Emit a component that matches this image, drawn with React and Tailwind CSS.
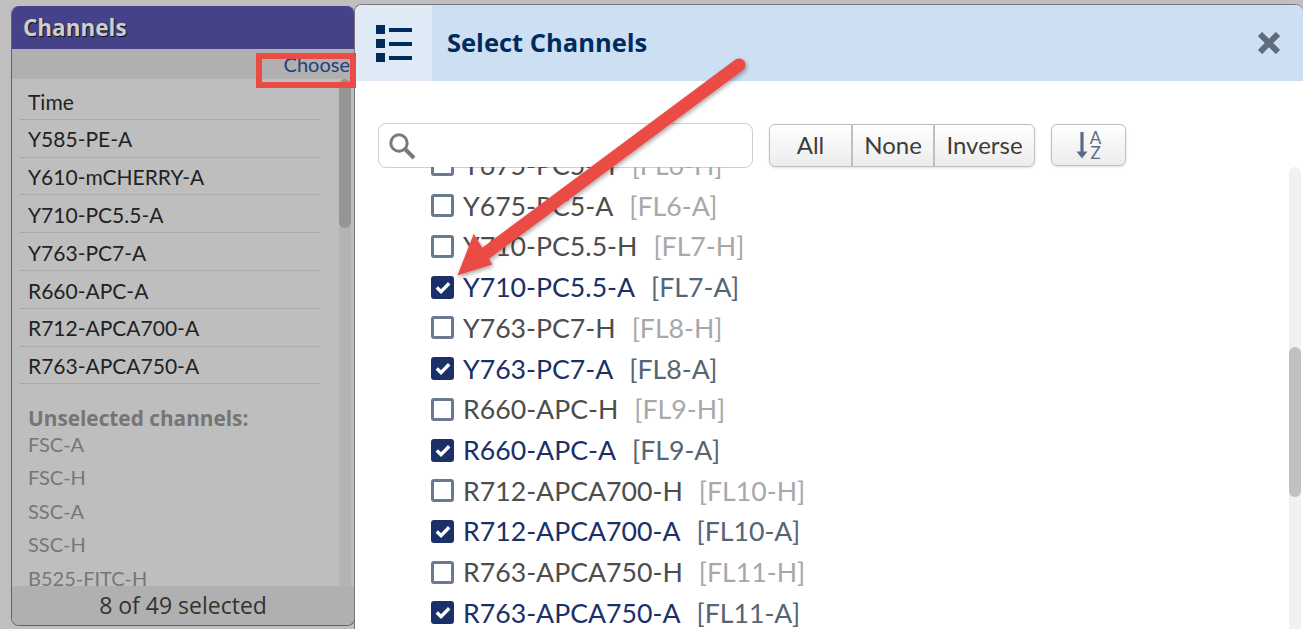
const selected = [
  "Time",
  "Y585-PE-A",
  "Y610-mCHERRY-A",
  "Y710-PC5.5-A",
  "Y763-PC7-A",
  "R660-APC-A",
  "R712-APCA700-A",
  "R763-APCA750-A",
];

const unselected = ["FSC-A", "FSC-H", "SSC-A", "SSC-H", "B525-FITC-H"];

const channels = [
  ["Y675-PC5-H", "[FL6-H]", false],
  ["Y675-PC5-A", "[FL6-A]", false],
  ["Y710-PC5.5-H", "[FL7-H]", false],
  ["Y710-PC5.5-A", "[FL7-A]", true],
  ["Y763-PC7-H", "[FL8-H]", false],
  ["Y763-PC7-A", "[FL8-A]", true],
  ["R660-APC-H", "[FL9-H]", false],
  ["R660-APC-A", "[FL9-A]", true],
  ["R712-APCA700-H", "[FL10-H]", false],
  ["R712-APCA700-A", "[FL10-A]", true],
  ["R763-APCA750-H", "[FL11-H]", false],
  ["R763-APCA750-A", "[FL11-A]", true],
];

function ChannelsPanel() {
  return (
    <aside className="mt-[6px] ml-[11px] flex h-[620px] w-[344px] shrink-0 flex-col overflow-hidden rounded-lg border border-t-0 border-[#3f6a94] bg-[#bebebe]">
      <div className="-mx-px flex h-[43px] shrink-0 items-center bg-[#454289] pl-3 font-['Open_Sans',sans-serif] text-[22.5px] font-bold text-[#cfcfcf] [text-shadow:1px_1px_1px_#111]">
        Channels
      </div>
      <div className="flex h-[30px] shrink-0 items-center justify-end bg-[#b0b0b0] pr-[4px] text-[20px] text-[#1f3f80]">
        Choose
      </div>
      <div className="relative min-h-0 flex-1 overflow-hidden pl-2">
        <div className="absolute top-0 right-[3px] bottom-0 w-3 rounded-t-md bg-[#b3b3b3]">
          <div className="h-[149px] rounded-md bg-[#959595]" />
        </div>
        <ul className="w-[300px] pt-[3px]">
          {selected.map((name) => (
            <li
              key={name}
              className="flex h-[37.8px] items-center border-b border-dotted border-[#999] pt-[2px] pl-2 text-[21px] text-[#222]"
            >
              {name}
            </li>
          ))}
        </ul>
        <div className="mt-[21px] pl-2 font-['Open_Sans',sans-serif] text-[20.8px] leading-[26px] font-bold text-[#757575]">
          Unselected channels:
        </div>
        <ul className="-mt-[4px] pl-2 text-[20px] text-[#767676]">
          {unselected.map((name) => (
            <li key={name} className="flex h-[33.4px] items-center">
              {name}
            </li>
          ))}
        </ul>
      </div>
      <div className="flex h-[39px] shrink-0 items-center justify-center bg-[#b0b0b0] pb-px font-['Open_Sans',sans-serif] text-[23px] font-medium text-[#333]">
        8 of 49 selected
      </div>
    </aside>
  );
}

function Checkbox({ checked }) {
  if (checked) {
    return (
      <span className="flex h-[23px] w-[23px] shrink-0 items-center justify-center rounded-[3px] bg-[#1b3068]">
        <svg width="16" height="13" viewBox="0 0 16 13" fill="none">
          <path d="M1.8 6.6 6 10.6 14.2 2.2" stroke="#fff" strokeWidth="3.4" />
        </svg>
      </span>
    );
  }
  return <span className="h-[23px] w-[23px] shrink-0 rounded-[3px] border-[3px] border-[#6a7a91] bg-white" />;
}

function ChannelRow({ name, fl, checked }) {
  return (
    <li className="flex h-[40.72px] items-center pl-[431px] text-[26.7px]">
      <Checkbox checked={checked} />
      <span className={checked ? "ml-[9px] text-[#1b3068]" : "ml-[9px] text-[#4d4d4d]"}>{name}</span>
      <span className={checked ? "ml-4 text-[#566573]" : "ml-4 text-[#a8a8a8]"}>{fl}</span>
    </li>
  );
}

function Toolbar() {
  return (
    <div className="flex h-[86px] items-start bg-white pt-[42px] pl-[23px]">
      <div className="flex h-[45px] w-[375px] shrink-0 items-center rounded-lg border border-[#cfcfcf] bg-white pl-2">
        <svg width="30" height="30" viewBox="0 0 30 30" fill="none" stroke="#7a7a7a">
          <circle cx="12" cy="12" r="8.2" strokeWidth="3" />
          <path d="M18 18 27 27" strokeWidth="4" />
        </svg>
      </div>
      <div className="mt-px ml-[16px] flex h-[43px] w-[266px] rounded-md border border-[#bfbfbf] bg-gradient-to-b from-white to-[#ececec] pb-[2px] text-[24px] text-[#3d3d3d] shadow-sm">
        <div className="-mb-[2px] flex w-[83px] items-center justify-center border-r-2 border-[#bfbfbf] pb-[2px]">All</div>
        <div className="-mb-[2px] flex w-[82px] items-center justify-center border-r-2 border-[#bfbfbf] pb-[2px]">None</div>
        <div className="flex flex-1 items-center justify-center">Inverse</div>
      </div>
      <div className="mt-px ml-[16px] flex h-[42px] w-[75px] items-center justify-center gap-[2px] rounded-md border border-[#bfbfbf] bg-gradient-to-b from-white to-[#ececec] text-[#5c6b85] shadow-sm">
        <svg width="12" height="28" viewBox="0 0 12 28" fill="#5c6b85">
          <path d="M4.4 1h3.2v19.5h3.9L6 27.5.5 20.5h3.9z" />
        </svg>
        <div className="flex w-3 flex-col items-center text-[17px] leading-[15px]">
          <span>A</span>
          <span>Z</span>
        </div>
      </div>
    </div>
  );
}

function SelectChannels() {
  return (
    <section className="mt-1 -ml-px flex h-[625px] min-w-0 flex-1 flex-col overflow-hidden rounded-t-lg border-t border-l border-[#777] bg-white">
      <header className="flex h-[76px] shrink-0 items-center bg-[#cddff3]">
        <div className="flex h-full w-[77px] items-center justify-center bg-[#e0eaf7]">
          <svg width="36" height="37" viewBox="0 0 36 37" fill="#002b5c">
            <rect x="0" y="0" width="9" height="9" />
            <rect x="13" y="3" width="23" height="4" />
            <rect x="0" y="14" width="9" height="9" />
            <rect x="13" y="17" width="23" height="4" />
            <rect x="0" y="28" width="9" height="9" />
            <rect x="13" y="31" width="23" height="4" />
          </svg>
        </div>
        <h1 className="ml-[15px] pb-[2px] font-['Open_Sans',sans-serif] text-[25.5px] font-bold text-[#002b5c]">Select Channels</h1>
        <svg className="mr-[23px] ml-auto" width="22" height="22" viewBox="0 0 22 22" stroke="#5f6b7a" strokeWidth="6">
          <path d="M2 2 20 20M20 2 2 20" />
        </svg>
      </header>
      <Toolbar />
      <div className="relative min-h-0 flex-1 overflow-hidden">
        <ul className="-mt-[22.4px] -ml-[355px]">
          {channels.map(([name, fl, checked]) => (
            <ChannelRow key={name} name={name} fl={fl} checked={checked} />
          ))}
        </ul>
        <div className="absolute top-0 right-[2px] bottom-0 w-3 rounded-t-md bg-[#f1f1f1]">
          <div className="mt-[180px] h-[150px] rounded-md bg-[#c1c1c1]" />
        </div>
      </div>
    </section>
  );
}

export default function App() {
  return (
    <div className="relative flex h-[629px] w-[1303px] overflow-hidden bg-[#bfbfbf] font-['Lato',sans-serif]">
      <ChannelsPanel />
      <SelectChannels />
      {/* annotation layered over the screenshot */}
      <div className="absolute top-[53px] left-[256px] h-[35px] w-[100px] border-[6px] border-[#ea4b45]" />
      <svg className="absolute inset-0" width="1303" height="629" fill="none">
        <defs>
          <filter id="arrow-shadow" x="-10%" y="-10%" width="120%" height="120%">
            <feDropShadow dx="1" dy="2" stdDeviation="2" floodColor="#000" floodOpacity="0.35" />
          </filter>
        </defs>
        <g filter="url(#arrow-shadow)">
          <path d="M739 65 482 256" stroke="#ea4b45" strokeWidth="13" strokeLinecap="round" />
          <path d="M459 274 474 236 491 264Z" fill="#ea4b45" stroke="#ea4b45" strokeWidth="2" />
        </g>
      </svg>
    </div>
  );
}
